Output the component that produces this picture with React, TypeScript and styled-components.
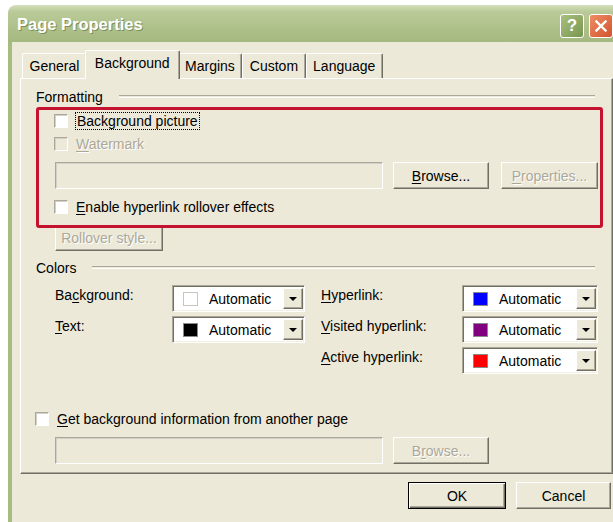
import React from "react";
import styled, { createGlobalStyle } from "styled-components";

const GlobalStyle = createGlobalStyle`
  html, body {
    margin: 0;
    padding: 0;
    background: #ffffff;
    overflow: hidden;
  }
  body {
    font-family: "Liberation Sans", Arial, sans-serif;
    font-size: 14px;
    color: #000;
  }
`;

const Window = styled.div`
  margin: 5px 0 0 8px;
  width: 614px;
`;

const TitleBar = styled.div`
  display: flex;
  align-items: center;
  justify-content: space-between;
  height: 37px;
  padding: 0 9px 0 9px;
  border-radius: 8px 8px 0 0;
  background: linear-gradient(
    to bottom,
    #d5e0bd 0%,
    #b9ca98 18%,
    #afc18b 60%,
    #a4b87f 100%
  );
`;

const Title = styled.span`
  font-family: "Liberation Sans", Arial, sans-serif;
  font-weight: bold;
  font-size: 16.5px;
  color: #ffffff;
  text-shadow: 1px 1px 0 #7d8f5a;
  margin-top: 2px;
`;

const Controls = styled.div`
  display: flex;
  gap: 5px;
  margin-top: 4px;
`;

const CaptionButton = styled.div<{ $tone: "help" | "close" }>`
  width: 24px;
  height: 24px;
  box-sizing: border-box;
  border: 1px solid #ffffff;
  border-radius: 3px;
  display: flex;
  align-items: center;
  justify-content: center;
  color: #ffffff;
  font-weight: bold;
  font-size: 17px;
  background: ${(p) =>
    p.$tone === "help"
      ? "linear-gradient(135deg, #a9c07f, #78964f)"
      : "linear-gradient(135deg, #ee8d65, #d2532c)"};
`;

const Body = styled.div`
  background: #ece9d8;
  border-left: 4px solid #a6bc80;
  padding: 8px 9px 20px 8px;
`;

const TabStrip = styled.div`
  display: flex;
  align-items: flex-end;
  height: 28px;
  padding-left: 2px;
`;

const Tab = styled.div<{ $active?: boolean }>`
  position: relative;
  z-index: ${(p) => (p.$active ? 1 : 0)};
  box-sizing: border-box;
  height: ${(p) => (p.$active ? "29px" : "25px")};
  margin: ${(p) => (p.$active ? "0 -2px -1px -2px" : "0")};
  padding: ${(p) => (p.$active ? "4px 9px 0 9px" : "4px 6.5px 0 6.5px")};
  background: #ece9d8;
  border-top: 1px solid #ffffff;
  border-left: 1px solid #ffffff;
  border-right: 1px solid #716f64;
  border-radius: 2px 2px 0 0;
  box-shadow: inset -1px 0 #aca899;
  white-space: nowrap;
`;

const Panel = styled.div`
  display: flex;
  flex-direction: column;
  align-items: flex-start;
  box-sizing: border-box;
  height: 396px;
  padding: 10px 9px 0 15px;
  border: 1px solid;
  border-color: #ffffff #716f64 #716f64 #ffffff;
  box-shadow: inset -1px -1px #aca899;
`;

const GroupHeader = styled.div<{ $gap?: number }>`
  display: flex;
  align-items: center;
  align-self: stretch;
  margin: ${(p) => p.$gap ?? 0}px 8px 0 0;
  height: 16px;
  line-height: 16px;
  white-space: nowrap;

  &::after {
    content: "";
    flex: 1;
    margin-left: 16px;
    height: 1px;
    border-top: 1px solid #aca899;
    border-bottom: 1px solid #ffffff;
    margin-top: -2px;
  }
`;

const Highlight = styled.div`
  position: relative;
  z-index: 1;
  align-self: stretch;
  display: flex;
  flex-direction: column;
  margin-top: 2px;
  padding: 2px 0 9px 16px;
  border: 3px solid #c5132f;
  border-radius: 3px;
`;

const CheckRow = styled.label<{ $gap?: number; $disabled?: boolean }>`
  display: flex;
  align-items: center;
  height: 18px;
  margin-top: ${(p) => p.$gap ?? 0}px;
  color: ${(p) => (p.$disabled ? "#aca899" : "#000")};
  text-shadow: ${(p) => (p.$disabled ? "1px 1px 0 #ffffff" : "none")};
  white-space: nowrap;
`;

const Box = styled.span<{ $disabled?: boolean }>`
  display: inline-block;
  box-sizing: border-box;
  width: 14px;
  height: 14px;
  margin: 0 8px 0 -1px;
  background: ${(p) => (p.$disabled ? "#ece9d8" : "#ffffff")};
  border: 1px solid;
  border-color: #aca899 #ffffff #ffffff #aca899;
  box-shadow: inset 1px 1px #d4d0c8;
`;

const Focus = styled.span`
  outline: 1px dotted #000;
  outline-offset: 0;
  padding: 0 1px;
`;

const Key = styled.u`
  text-decoration: underline;
  text-underline-offset: 2px;
`;

const FieldRow = styled.div<{ $gap?: number; $indent?: number }>`
  display: flex;
  align-items: center;
  margin-top: ${(p) => p.$gap ?? 0}px;
  margin-left: ${(p) => p.$indent ?? 0}px;
`;

const TextField = styled.div`
  box-sizing: border-box;
  width: 328px;
  height: 27px;
  background: #ece9d8;
  border: 1px solid;
  border-color: #aca899 #ffffff #ffffff #aca899;
  box-shadow: inset 1px 1px #d4d0c8;
`;

const Button = styled.div<{
  $width: number;
  $height?: number;
  $disabled?: boolean;
  $default?: boolean;
  $gap?: number;
}>`
  box-sizing: border-box;
  display: flex;
  align-items: center;
  justify-content: center;
  width: ${(p) => p.$width}px;
  height: ${(p) => p.$height ?? 27}px;
  margin-left: ${(p) => p.$gap ?? 0}px;
  background: #ece9d8;
  border: 1px solid;
  border-color: ${(p) =>
    p.$default ? "#000 #000 #000 #000" : "#ffffff #716f64 #716f64 #ffffff"};
  box-shadow: ${(p) =>
    p.$default
      ? "inset 1px 1px #ffffff, inset -1px -1px #716f64, inset -2px -2px #aca899"
      : "inset -1px -1px #aca899"};
  color: ${(p) => (p.$disabled ? "#aca899" : "#000")};
  text-shadow: ${(p) => (p.$disabled ? "1px 1px 0 #ffffff" : "none")};
  white-space: nowrap;
`;

const RolloverButton = styled(Button)`
  margin: -3px 0 0 19px;
`;

const ColorGrid = styled.div`
  display: grid;
  grid-template-columns: 117px 133px 157px 136px;
  grid-auto-rows: 27px;
  row-gap: 4px;
  margin: 9px 0 0 19px;
`;

const ColorLabel = styled.div<{ $indent?: boolean; $col?: number }>`
  grid-column: ${(p) => p.$col ?? "auto"};
  line-height: 20px;
  padding-left: ${(p) => (p.$indent ? 16 : 0)}px;
  white-space: nowrap;
`;

const Combo = styled.div`
  box-sizing: border-box;
  display: flex;
  align-items: center;
  height: 27px;
  padding: 2px 1px 2px 0;
  background: #ffffff;
  border: 1px solid;
  border-color: #aca899 #ffffff #ffffff #aca899;
  box-shadow: inset 1px 1px #716f64, inset -1px -1px #f1efe2;
`;

const Swatch = styled.span<{ $color: string }>`
  box-sizing: border-box;
  width: 15px;
  height: 14px;
  margin-left: 10px;
  background: ${(p) => p.$color};
  border: 1px solid ${(p) => (p.$color === "#ffffff" ? "#c8c6bb" : "#8a8a8a")};
`;

const ComboText = styled.span`
  flex: 1;
  margin-left: 11px;
`;

const DropButton = styled.span`
  box-sizing: border-box;
  display: flex;
  align-items: center;
  justify-content: center;
  width: 20px;
  height: 21px;
  background: #ece9d8;
  border: 1px solid;
  border-color: #ffffff #716f64 #716f64 #ffffff;
  box-shadow: inset -1px -1px #aca899;

  &::before {
    content: "";
    border-left: 4px solid transparent;
    border-right: 4px solid transparent;
    border-top: 4px solid #000;
  }
`;

const Footer = styled.div`
  display: flex;
  justify-content: flex-end;
  gap: 10px;
  margin-top: 8px;
  padding-right: 2px;
`;

const swatches = {
  background: "#ffffff",
  text: "#000000",
  hyperlink: "#0000ff",
  visited: "#800080",
  active: "#ff0000",
};

const ColorCombo = ({ color }: { color: string }) => (
  <Combo>
    <Swatch $color={color} />
    <ComboText>Automatic</ComboText>
    <DropButton />
  </Combo>
);

const CloseGlyph = () => (
  <svg width="12" height="12" viewBox="0 0 12 12">
    <path d="M1.5 1.5 L10.5 10.5 M10.5 1.5 L1.5 10.5" stroke="#fff" strokeWidth="2.4" strokeLinecap="square" />
  </svg>
);

const App = () => {
  return (
    <>
      <GlobalStyle />
      <Window>
        <TitleBar>
          <Title>Page Properties</Title>
          <Controls>
            <CaptionButton $tone="help">?</CaptionButton>
            <CaptionButton $tone="close">
              <CloseGlyph />
            </CaptionButton>
          </Controls>
        </TitleBar>
        <Body>
          <TabStrip>
            <Tab>General</Tab>
            <Tab $active>Background</Tab>
            <Tab>Margins</Tab>
            <Tab>Custom</Tab>
            <Tab>Language</Tab>
          </TabStrip>
          <Panel>
            <GroupHeader>Formatting</GroupHeader>
            <Highlight>
              <CheckRow>
                <Box />
                <Focus>Background picture</Focus>
              </CheckRow>
              <CheckRow $gap={5} $disabled>
                <Box $disabled />
                <span>
                  <Key>W</Key>atermark
                </span>
              </CheckRow>
              <FieldRow $gap={9}>
                <TextField />
                <Button $width={96} $gap={10}>
                  <span>
                    <Key>B</Key>rowse...
                  </span>
                </Button>
                <Button $width={97} $gap={12} $disabled>
                  <span>
                    <Key>P</Key>roperties...
                  </span>
                </Button>
              </FieldRow>
              <CheckRow $gap={9}>
                <Box />
                <span>
                  <Key>E</Key>nable hyperlink rollover effects
                </span>
              </CheckRow>
            </Highlight>
            <RolloverButton $width={108} $height={26} $disabled>
              Rollover style...
            </RolloverButton>

            <GroupHeader $gap={9}>Colors</GroupHeader>
            <ColorGrid>
              <ColorLabel>
                Ba<Key>c</Key>kground:
              </ColorLabel>
              <ColorCombo color={swatches.background} />
              <ColorLabel $indent>
                <Key>H</Key>yperlink:
              </ColorLabel>
              <ColorCombo color={swatches.hyperlink} />

              <ColorLabel>
                <Key>T</Key>ext:
              </ColorLabel>
              <ColorCombo color={swatches.text} />
              <ColorLabel $indent>
                <Key>V</Key>isited hyperlink:
              </ColorLabel>
              <ColorCombo color={swatches.visited} />

              <ColorLabel $indent $col={3}>
                <Key>A</Key>ctive hyperlink:
              </ColorLabel>
              <ColorCombo color={swatches.active} />
            </ColorGrid>

            <CheckRow $gap={36}>
              <Box />
              <span>
                <Key>G</Key>et background information from another page
              </span>
            </CheckRow>
            <FieldRow $gap={9} $indent={19}>
              <TextField />
              <Button $width={96} $gap={10} $disabled>
                <span>
                  B<Key>r</Key>owse...
                </span>
              </Button>
            </FieldRow>
          </Panel>
          <Footer>
            <Button $width={98} $default>
              OK
            </Button>
            <Button $width={95}>Cancel</Button>
          </Footer>
        </Body>
      </Window>
    </>
  );
};

export default App;
